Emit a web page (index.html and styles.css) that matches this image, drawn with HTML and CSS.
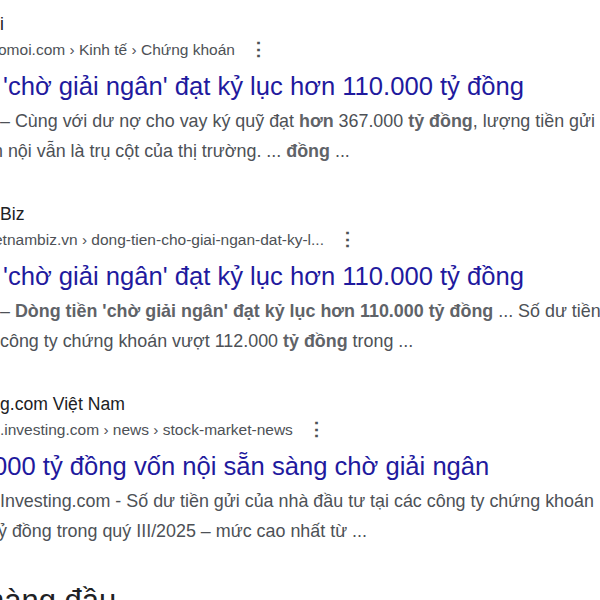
FILE: index.html
```html
<!DOCTYPE html>
<html lang="vi">
<head>
    <meta charset="UTF-8">
    <meta name="viewport" content="width=device-width, initial-scale=1.0">
    <title>Kết quả tìm kiếm</title>
    <link rel="stylesheet" href="styles.css">
</head>
<body>

    <div class="results">
        <!-- Kết quả 1 -->
        <div class="result">
            <div class="site">i</div>
            <div class="url"><span class="cut1">omoi.com › Kinh tế › Chứng khoán</span><span class="more">⋮</span></div>
            <a class="title cut0" href="#">'chờ giải ngân' đạt kỷ lục hơn 110.000 tỷ đồng</a>
            <div class="snippet">
                <div class="line">– Cùng với dư nợ cho vay ký quỹ đạt <b>hơn</b> 367.000 <b>tỷ đồng</b>, lượng tiền gửi</div>
                <div class="line cut2">n nội vẫn là trụ cột của thị trường. ... <b>đồng</b> ...</div>
            </div>
        </div>

        <!-- Kết quả 2 -->
        <div class="result">
            <div class="site">Biz</div>
            <div class="url"><span class="cut3">etnambiz.vn › dong-tien-cho-giai-ngan-dat-ky-l...</span><span class="more">⋮</span></div>
            <a class="title cut0" href="#">'chờ giải ngân' đạt kỷ lục hơn 110.000 tỷ đồng</a>
            <div class="snippet">
                <div class="line">– <b>Dòng tiền 'chờ giải ngân' đạt kỷ lục hơn 110.000 tỷ đồng</b> ... Số dư tiền</div>
                <div class="line">công ty chứng khoán vượt 112.000 <b>tỷ đồng</b> trong ...</div>
            </div>
        </div>

        <!-- Kết quả 3 -->
        <div class="result">
            <div class="site">g.com Việt Nam</div>
            <div class="url"><span>.investing.com › news › stock-market-news</span><span class="more">⋮</span></div>
            <a class="title cut4" href="#">000 tỷ đồng vốn nội sẵn sàng chờ giải ngân</a>
            <div class="snippet">
                <div class="line">Investing.com - Số dư tiền gửi của nhà đầu tư tại các công ty chứng khoán</div>
                <div class="line cut5">tỷ đồng trong quý III/2025 – mức cao nhất từ ...</div>
            </div>
        </div>

        <h2 class="heading cut6">hàng đầu</h2>
    </div>

</body>
</html>
```

FILE: styles.css
```css
body {
    margin: 0;
    background: #fff;
    font-family: "Liberation Sans", Arial, sans-serif;
    overflow: hidden;
    height: 600px;
}
.results {
    white-space: nowrap;
    padding-top: 11px;
}
.result {
    height: 190px;
}
.site {
    font-size: 17.6px;
    line-height: 26px;
    color: #202124;
}
.url {
    display: flex;
    align-items: center;
    font-size: 15.5px;
    line-height: 26px;
    color: #4d5156;
}
.more {
    font-size: 19px;
    font-weight: bold;
    color: #4d5156;
    margin-left: 14px;
}
.title {
    display: block;
    font-size: 25.6px;
    line-height: 36px;
    margin-top: 5px;
    color: #1f1a9e;
    text-decoration: none;
}
.snippet {
    font-size: 17.9px;
    line-height: 30px;
    color: #4d5156;
    margin-top: 2px;
}
.snippet b {
    color: #5f6368;
}
.heading {
    font-size: 31px;
    font-weight: normal;
    color: #202124;
    margin: 0;
    line-height: 40px;
}

/* các đoạn bị cắt ở mép trái */
.cut0 { text-indent: 3px; }
.cut1 { margin-left: -2px; }
.cut2 { text-indent: -7px; }
.cut3 { margin-left: -6px; }
.cut4 { text-indent: -7px; }
.cut5 { text-indent: -7px; }
.cut6 { text-indent: -13px; }
```
